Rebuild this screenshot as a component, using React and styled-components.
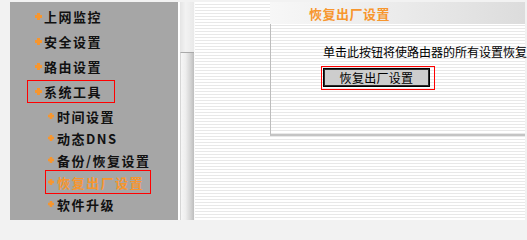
import React from "react";
import styled, { createGlobalStyle } from "styled-components";

const Global = createGlobalStyle`
  html, body { margin: 0; padding: 0; background: #f2f2f2; overflow: hidden; }
  * { box-sizing: border-box; }
`;

const FONT = `"Noto Sans CJK SC", "Noto Sans", sans-serif`;
const ORANGE = "#f7962e";

const Frame = styled.div`
  display: flex;
  width: 527px;
  height: 220px;
  padding: 2px 2px 0 10px;
  background: #f2f2f2;
  overflow: hidden;
  font-family: ${FONT};
`;

const Sidebar = styled.nav`
  width: 168px;
  flex: none;
  background: #a6a6a6;
  padding-top: 2px;
  display: flex;
  flex-direction: column;
`;

const Divider = styled.div`
  width: 2px;
  flex: none;
  background: #ffffff;
`;

const Scrollbar = styled.div`
  width: 15px;
  flex: none;
  background: linear-gradient(to right, #e4e4e4, #f2f2f2 40%, #e9e9e9);
  display: flex;
  flex-direction: column;
  border-right: 1px solid #fafafa;
`;

const Thumb = styled.div`
  margin-top: 50px;
  flex: 1;
  border-top: 1px solid #a9a9a9;
  border-left: 1px solid #d6d6d6;
  background: linear-gradient(to right, #f6f6f6 0%, #eeeeee 35%, #d2d2d2 75%, #bdbdbd 100%);
`;

const Main = styled.main`
  flex: 1;
  padding-left: 75px;
  background: repeating-linear-gradient(
    to bottom,
    #ffffff 0px,
    #ffffff 2px,
    #e8e8e8 2px,
    #e8e8e8 3px
  );
  display: flex;
  flex-direction: column;
`;

const Row = styled.div`
  height: ${(p) => (p.$sub ? 22 : 25)}px;
  display: flex;
  align-items: center;
  padding-left: ${(p) => (p.$sub ? 35 : 17)}px;
  margin-top: ${(p) => (p.$first ? 1 : 0)}px;
`;

const Label = styled.span`
  display: inline-flex;
  align-items: center;
  height: ${(p) => (p.$sub ? 24 : 23)}px;
  padding: ${(p) => (p.$sub ? "0 6px 0 2px" : "0 12px 0 7px")};
  border: 1px solid ${(p) => (p.$boxed ? "#ff0000" : "transparent")};
  gap: ${(p) => (p.$sub ? 3 : 2)}px;
  font-size: 13px;
  font-weight: 700;
  letter-spacing: 1.5px;
  color: ${(p) => (p.$active ? ORANGE : "#111111")};
  white-space: nowrap;
`;

const Bullet = ({ size }) => (
  <svg width={size} height={size} viewBox="0 0 7 7" style={{ flex: "none" }}>
    <path d="M2 0h3v2h2v3h-2v2h-3v-2h-2v-3h2z" fill={ORANGE} />
  </svg>
);

const Panel = styled.section`
  width: 255px;
  display: flex;
  flex-direction: column;
`;

const TitleBar = styled.div`
  height: 22px;
  display: flex;
  align-items: center;
  padding-left: 39px;
  background: linear-gradient(to right, #f7f7f7 0%, #ebebeb 50%, #dcdcdc 100%);
  color: ${ORANGE};
  font-size: 13px;
  font-weight: 700;
  letter-spacing: 0.5px;
`;

const Content = styled.div`
  height: 112px;
  border-left: 1px solid #bdbdbd;
  border-bottom: 2px solid #c4c4c4;
  padding: 21px 0 0 52px;
  display: flex;
  flex-direction: column;
  align-items: flex-start;
`;

const Description = styled.p`
  margin: 0;
  font-size: 12px;
  line-height: 14px;
  color: #000;
  white-space: nowrap;
`;

const Focus = styled.div`
  margin-top: 7px;
  margin-left: -2px;
  border: 1px solid #ff0000;
  padding: 1px 4px 2px 1px;
  display: flex;
`;

const Button = styled.button`
  width: 107px;
  height: 19px;
  padding: 0;
  background: #cdcdcd;
  border: 1px solid #000;
  box-shadow: inset 1px 1px 0 #2a2a2a, inset -1px -1px 0 #2a2a2a;
  font-family: ${FONT};
  font-size: 12px;
  color: #000;
  display: flex;
  align-items: center;
  justify-content: center;
  letter-spacing: 0.3px;
`;

const menu = [
  { label: "上网监控" },
  { label: "安全设置" },
  { label: "路由设置" },
  { label: "系统工具", boxed: true },
  { label: "时间设置", sub: true, first: true },
  { label: "动态DNS", sub: true },
  { label: "备份/恢复设置", sub: true },
  { label: "恢复出厂设置", sub: true, boxed: true, active: true },
  { label: "软件升级", sub: true },
];

export default function App() {
  return (
    <>
      <Global />
      <Frame>
        <Sidebar>
          {menu.map((m) => (
            <Row key={m.label} $sub={m.sub} $first={m.first}>
              <Label $sub={m.sub} $boxed={m.boxed} $active={m.active}>
                <Bullet size={m.sub ? 6 : 7} />
                {m.label}
              </Label>
            </Row>
          ))}
        </Sidebar>
        <Divider />
        <Scrollbar>
          <Thumb />
        </Scrollbar>
        <Main>
          <Panel>
            <TitleBar>恢复出厂设置</TitleBar>
            <Content>
              <Description>单击此按钮将使路由器的所有设置恢复到出厂时的默认状态。</Description>
              <Focus>
                <Button>恢复出厂设置</Button>
              </Focus>
            </Content>
          </Panel>
        </Main>
      </Frame>
    </>
  );
}
